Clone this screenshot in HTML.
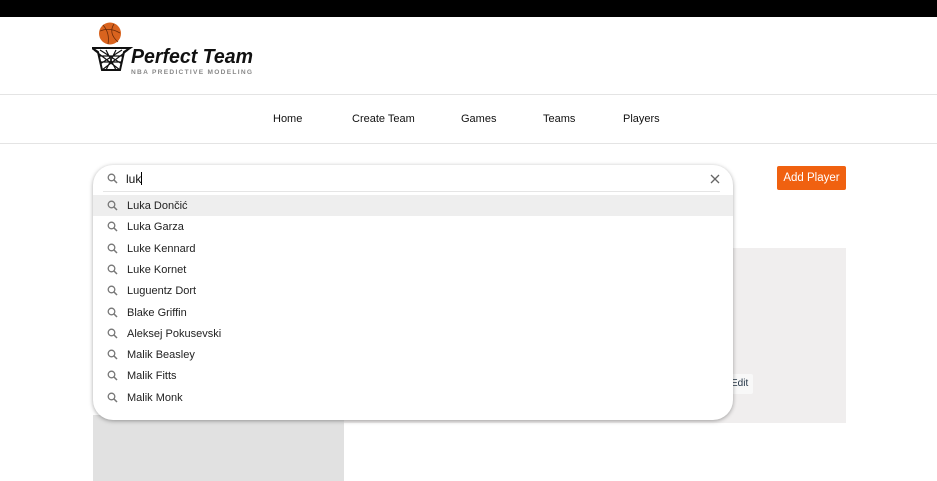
<!DOCTYPE html>
<html><head><meta charset="utf-8"><style>
*{margin:0;padding:0;box-sizing:border-box}
body{width:937px;height:481px;overflow:hidden;background:#fff;font-family:"Liberation Sans",Arial,sans-serif;position:relative}
.top{position:absolute;left:0;top:0;width:937px;height:17px;background:#000}
.hdr{position:absolute;left:0;top:94px;width:937px;height:1px;background:#e4e4e4}
.hdr2{position:absolute;left:0;top:143px;width:937px;height:1px;background:#e4e4e4}
.nav a{position:absolute;top:113px;font-size:11px;color:#111;text-decoration:none}
.btn{position:absolute;left:777px;top:166px;width:69px;height:24px;background:#f06110;color:#fff;font-size:11.5px;border-radius:2px;text-align:center;line-height:25px}
.card{position:absolute;left:344px;top:248px;width:502px;height:175px;background:#f0eeee}
.left{position:absolute;left:93px;top:415px;width:251px;height:66px;background:#e1e1e1}
.edit{position:absolute;left:725px;top:374px;width:28px;height:20px;background:#f8f8f8;font-size:10px;color:#234;line-height:20px;padding-left:6px;border-radius:2px}
.dd{position:absolute;left:93px;top:165px;width:640px;height:255px;background:#fff;border-radius:20px;box-shadow:0 1px 4px rgba(0,0,0,.35)}
.sep{position:absolute;left:10px;top:26px;width:617px;height:1px;background:#e5e5e5}
.q{position:absolute;left:33px;top:7px;font-size:12px;color:#111}
.q i{display:inline-block;width:1px;height:13px;background:#000;vertical-align:-2px}
.x{position:absolute;left:617px;top:9px}
.row{position:absolute;left:0;width:640px;height:21px;font-size:11px;color:#222;line-height:23px;padding-left:34px}
.row.h{background:#eeeeee}
.ic{position:absolute;left:14px;top:5px}
.qi{position:absolute;left:14px;top:8px}
</style></head><body>
<div class="top"></div>
<svg style="position:absolute;left:92px;top:22px" width="165" height="56" viewBox="0 0 165 56">
<circle cx="18" cy="11.5" r="11" fill="#d9631e"/>
<path d="M8 9 Q18 5 28 11 M11 3 Q18 11 16 22 M22 2 Q16 11 26 20" stroke="#6b2a08" stroke-width="0.8" fill="none"/>
<path d="M0 26 H38 L32 30 L28 48 H10 L6 30 Z" fill="none" stroke="#111" stroke-width="2"/>
<path d="M2 28 L28 48 M8 28 L30 42 M36 28 L10 48 M30 28 L8 42 M14 28 L24 48 M24 28 L14 48 M6 34 H32 M8 40 H30" stroke="#111" stroke-width="1.2"/>
<text x="39" y="41" font-family="Liberation Sans" font-weight="bold" font-style="italic" font-size="20" fill="#111" textLength="122" lengthAdjust="spacingAndGlyphs">Perfect Team</text>
<text x="39" y="52" font-family="Liberation Sans" font-weight="bold" font-size="6.6" fill="#888" textLength="121" lengthAdjust="spacing">NBA PREDICTIVE MODELING</text>
</svg>
<div class="hdr"></div><div class="hdr2"></div>
<div class="nav"><a style="left:273px">Home</a><a style="left:352px">Create Team</a><a style="left:461px">Games</a><a style="left:543px">Teams</a><a style="left:623px">Players</a></div>
<div class="btn">Add Player</div>
<div class="card"></div><div class="left"></div>
<div class="edit">Edit</div>
<div class="dd">
<svg class="qi" width="11" height="11" viewBox="0 0 11 11"><circle cx="4.5" cy="4.5" r="3.3" stroke="#777" stroke-width="1.3" fill="none"/><path d="M7 7 L10 10" stroke="#777" stroke-width="1.5"/></svg>
<div class="q">luk<i></i></div>
<svg class="x" width="10" height="10" viewBox="0 0 10 10"><path d="M1 1 L9 9 M9 1 L1 9" stroke="#666" stroke-width="1.3"/></svg>
<div class="sep"></div>
<div id="rows"></div>
</div>
<script>
var n=["Luka Dončić","Luka Garza","Luke Kennard","Luke Kornet","Luguentz Dort","Blake Griffin","Aleksej Pokusevski","Malik Beasley","Malik Fitts","Malik Monk"],h="";
n.forEach(function(t,i){h+='<div class="row'+(i==0?' h':'')+'" style="top:'+(30+i*21.3)+'px"><svg class="ic" width="11" height="11" viewBox="0 0 11 11"><circle cx="4.5" cy="4.5" r="3.3" stroke="#777" stroke-width="1.3" fill="none"/><path d="M7 7 L10 10" stroke="#777" stroke-width="1.5"/></svg>'+t+'</div>'});
document.getElementById("rows").innerHTML=h;
</script>
</body></html>
